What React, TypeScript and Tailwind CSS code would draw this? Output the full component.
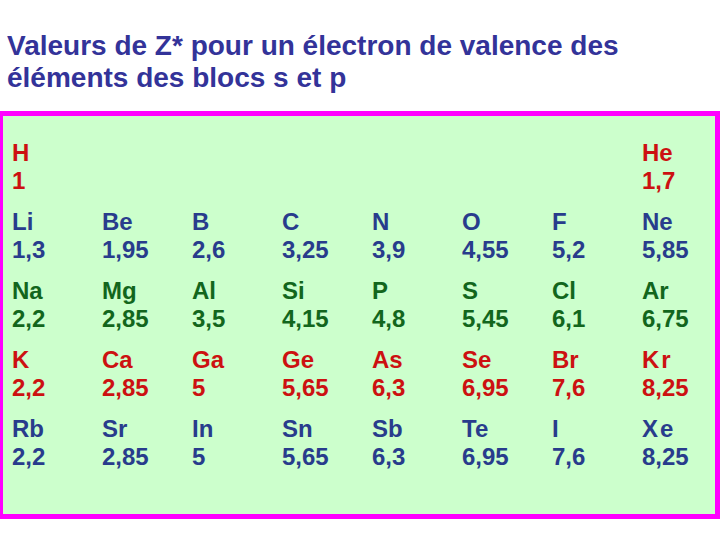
import React from 'react';

type Cell = { sym: string; z: string; wide?: boolean } | null;

// one row per period, colour per row as in the slide
const rows: { color: string; cells: Cell[] }[] = [
  {
    color: 'text-[#cc1111]',
    cells: [{ sym: 'H', z: '1' }, null, null, null, null, null, null, { sym: 'He', z: '1,7' }],
  },
  {
    color: 'text-[#283c8c]',
    cells: [
      { sym: 'Li', z: '1,3' },
      { sym: 'Be', z: '1,95' },
      { sym: 'B', z: '2,6' },
      { sym: 'C', z: '3,25' },
      { sym: 'N', z: '3,9' },
      { sym: 'O', z: '4,55' },
      { sym: 'F', z: '5,2' },
      { sym: 'Ne', z: '5,85' },
    ],
  },
  {
    color: 'text-[#12661c]',
    cells: [
      { sym: 'Na', z: '2,2' },
      { sym: 'Mg', z: '2,85' },
      { sym: 'Al', z: '3,5' },
      { sym: 'Si', z: '4,15' },
      { sym: 'P', z: '4,8' },
      { sym: 'S', z: '5,45' },
      { sym: 'Cl', z: '6,1' },
      { sym: 'Ar', z: '6,75' },
    ],
  },
  {
    color: 'text-[#cc1111]',
    cells: [
      { sym: 'K', z: '2,2' },
      { sym: 'Ca', z: '2,85' },
      { sym: 'Ga', z: '5' },
      { sym: 'Ge', z: '5,65' },
      { sym: 'As', z: '6,3' },
      { sym: 'Se', z: '6,95' },
      { sym: 'Br', z: '7,6' },
      { sym: 'Kr', z: '8,25', wide: true },
    ],
  },
  {
    color: 'text-[#283c8c]',
    cells: [
      { sym: 'Rb', z: '2,2' },
      { sym: 'Sr', z: '2,85' },
      { sym: 'In', z: '5' },
      { sym: 'Sn', z: '5,65' },
      { sym: 'Sb', z: '6,3' },
      { sym: 'Te', z: '6,95' },
      { sym: 'I', z: '7,6' },
      { sym: 'Xe', z: '8,25', wide: true },
    ],
  },
];

const App: React.FC = () => {
  return (
    <div className="w-[720px] h-[540px] bg-white overflow-hidden font-['Liberation_Sans',Arial,sans-serif] font-bold">
      {/* Title */}
      <h1 className="pt-[30px] pl-[7px] text-[28px] leading-[32px] text-[#333399]">
        Valeurs de Z* pour un électron de valence des
        <br />
        éléments des blocs s et p
      </h1>

      {/* Table box */}
      <div className="mt-[17px] h-[408px] border-y-[5px] border-l-[3px] border-r-[5px] border-[#ff00ff] bg-[#ccffcc] pt-[23px] pl-[9px]">
        <div className="flex flex-col">
          {rows.map((row, i) => (
            <div key={i} className={`grid grid-cols-[repeat(8,90px)] h-[69px] text-[24px] leading-[28px] ${row.color}`}>
              {row.cells.map((c, j) => (
                <div key={j}>
                  {c && (
                    <>
                      <div className={c.wide ? 'tracking-[2px]' : ''}>{c.sym}</div>
                      <div>{c.z}</div>
                    </>
                  )}
                </div>
              ))}
            </div>
          ))}
        </div>
      </div>
    </div>
  );
};

export default App;
